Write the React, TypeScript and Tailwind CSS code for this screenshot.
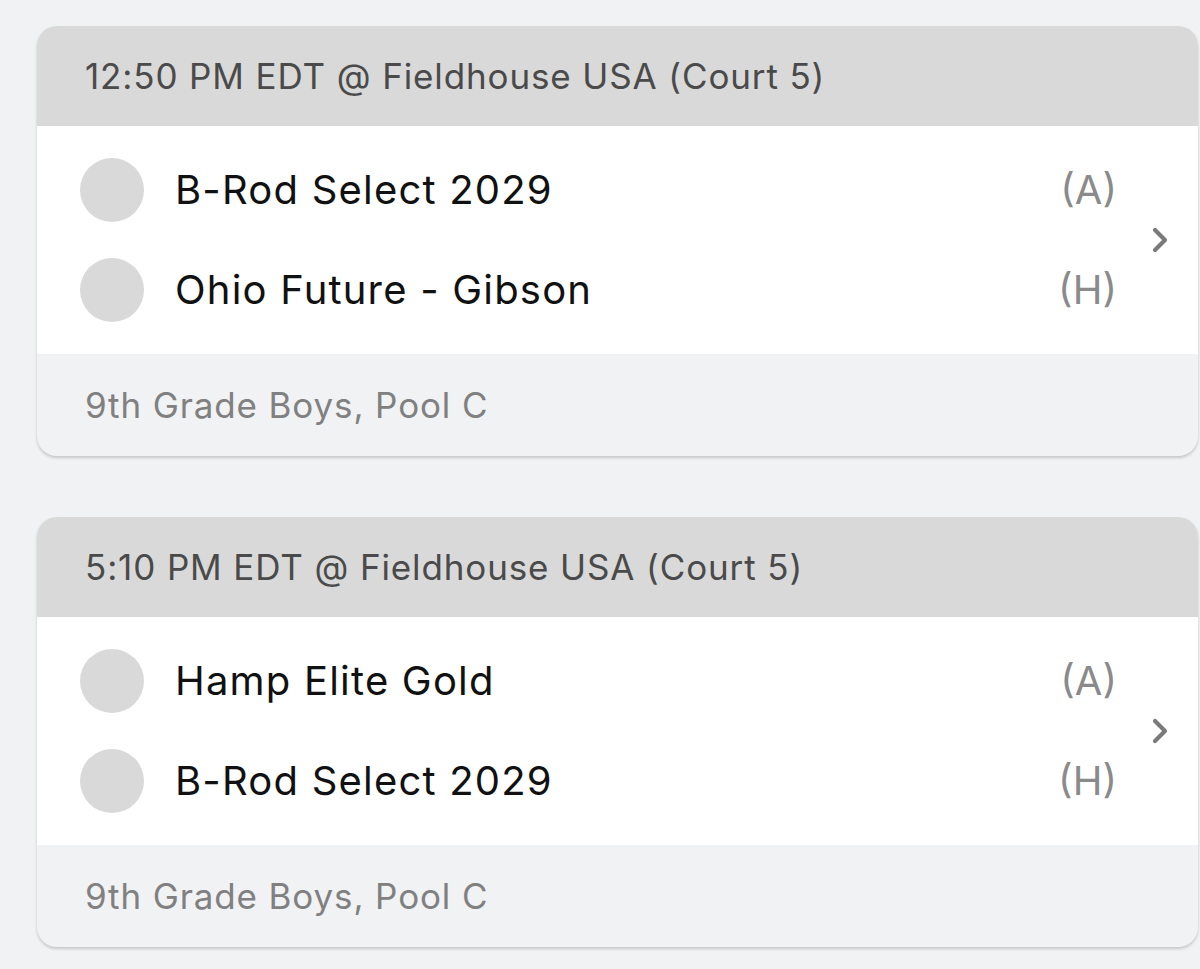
import { ChevronRight } from "lucide-react";

type Game = {
  time: string;
  away: string;
  home: string;
  division: string;
};

const GAMES: Game[] = [
  {
    time: "12:50 PM EDT @ Fieldhouse USA (Court 5)",
    away: "B-Rod Select 2029",
    home: "Ohio Future - Gibson",
    division: "9th Grade Boys, Pool C",
  },
  {
    time: "5:10 PM EDT @ Fieldhouse USA (Court 5)",
    away: "Hamp Elite Gold",
    home: "B-Rod Select 2029",
    division: "9th Grade Boys, Pool C",
  },
];

function TeamRow({ name, side }: { name: string; side: string }) {
  return (
    <div className="flex h-[100px] items-center">
      <div className="h-[64px] w-[64px] shrink-0 rounded-full bg-[#d9d9d9]" />
      <div className="ml-[31px] flex-1 text-[40px] leading-none tracking-[0.03em] text-[#111]">{name}</div>
      <div className="text-[40px] leading-none text-[#8a8a8a]">{side}</div>
    </div>
  );
}

function GameCard({ g }: { g: Game }) {
  return (
    <div className="ml-[37px] mr-[2px] overflow-hidden rounded-[20px] bg-[#f1f2f4] shadow-[0_2px_3px_rgba(0,0,0,0.18)]">
      <div className="flex h-[100px] items-center bg-[#d9d9d9] pl-[48px] text-[35px] tracking-[0.025em] text-[#4a4a4a]">
        {g.time}
      </div>
      <div className="flex h-[228px] items-center bg-white pl-[43px] pr-[18px]">
        <div className="flex-1 py-[14px]">
          <TeamRow name={g.away} side="(A)" />
          <TeamRow name={g.home} side="(H)" />
        </div>
        <ChevronRight className="ml-[23px] h-[40px] w-[40px] text-[#7a7a7a]" strokeWidth={2.5} />
      </div>
      <div className="flex h-[102px] items-center pl-[48px] text-[35px] tracking-[0.025em] text-[#808080]">
        {g.division}
      </div>
    </div>
  );
}

export default function App() {
  return (
    <div
      className="min-h-[969px] bg-[#f1f2f4] pt-[26px]"
      style={{ fontFamily: "Inter, 'Noto Sans', sans-serif" }}
    >
      <div className="flex flex-col gap-[61px]">
        {GAMES.map((g, i) => (
          <GameCard key={i} g={g} />
        ))}
      </div>
    </div>
  );
}
